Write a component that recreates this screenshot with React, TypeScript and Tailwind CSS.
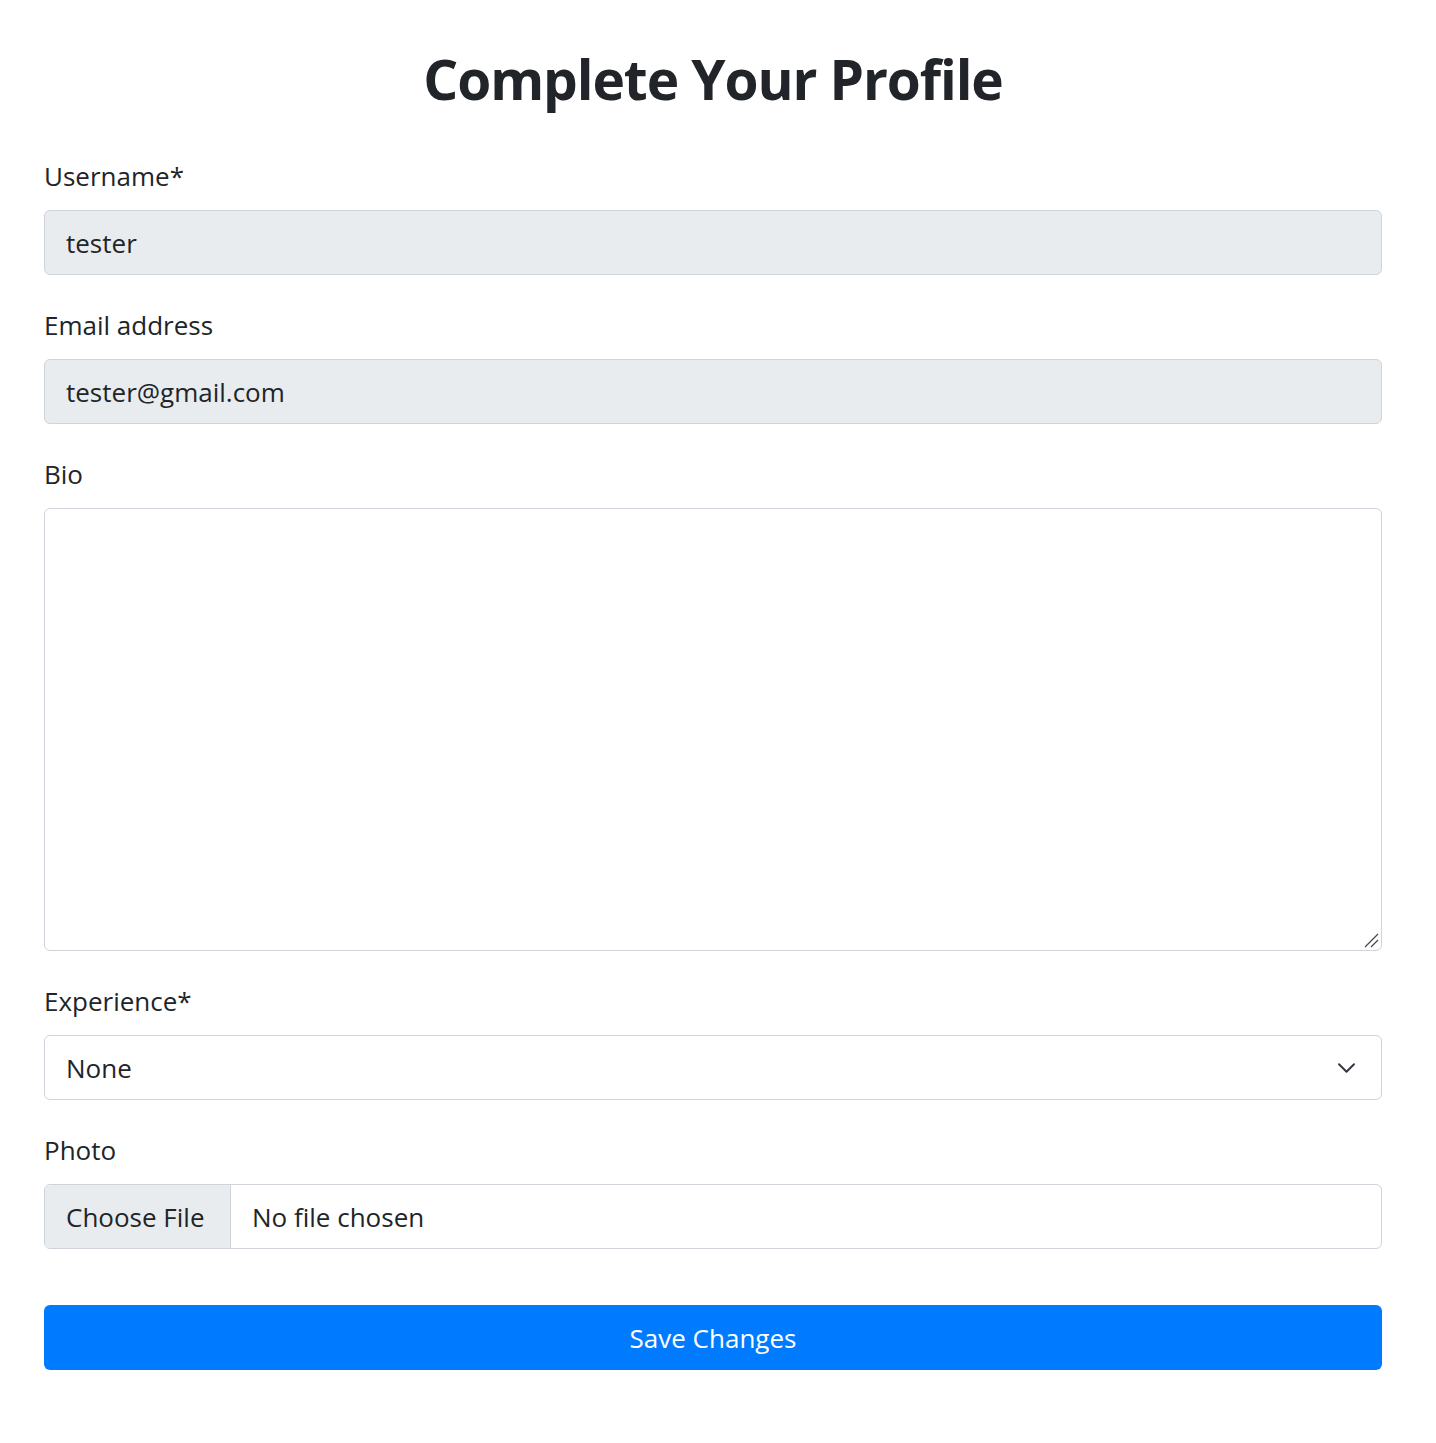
import React from "react";

function Label({ children }: { children: React.ReactNode }) {
  return (
    <div className="h-[41px] mb-[14px] pt-[1px] text-[26px] leading-[41px] text-[#212529]">{children}</div>
  );
}

export default function App() {
  return (
    <div
      className="min-h-[1443px] bg-white text-[#212529]"
      style={{ fontFamily: '"Open Sans", "Noto Sans", sans-serif' }}
    >
      <div className="ml-[44px] w-[1338px] pt-[38px]">
        <h1 className="text-center text-[55px] font-bold tracking-[-1.1px] leading-[82px] h-[82px] mb-[35px] text-[#212529]">
          Complete Your Profile
        </h1>

        <div className="flex flex-col">
          <Label>Username*</Label>
          <div className="h-[65px] rounded-[6px] border border-[#ced4da] bg-[#e9ecef] px-[21px] pt-[2px] flex items-center text-[26px]">
            tester
          </div>

          <div className="h-[29px]" />
          <Label>Email address</Label>
          <div className="h-[65px] rounded-[6px] border border-[#ced4da] bg-[#e9ecef] px-[21px] pt-[2px] flex items-center text-[26px]">
            tester@gmail.com
          </div>

          <div className="h-[29px]" />
          <Label>Bio</Label>
          <div className="relative h-[443px]">
            <textarea
              className="block w-full h-full rounded-[6px] border border-[#ced4da] bg-white px-[21px] py-[10px] text-[26px] outline-none resize-none"
              defaultValue=""
            />
            <svg className="absolute right-[2px] bottom-[2px]" width="18" height="18" viewBox="0 0 18 18" fill="none">
              <path d="M3 16 L16 3" stroke="#4a4a4a" strokeWidth="1.3" />
              <path d="M9 16 L16 9" stroke="#4a4a4a" strokeWidth="1.3" />
            </svg>
          </div>

          <div className="h-[29px]" />
          <Label>Experience*</Label>
          <div className="relative h-[65px] rounded-[6px] border border-[#ced4da] bg-white px-[21px] pt-[2px] flex items-center text-[26px]">
            None
            <svg
              className="absolute right-[21px] top-1/2 -translate-y-1/2"
              width="27"
              height="20"
              viewBox="0 0 16 16"
              fill="none"
            >
              <path d="m2 5 6 6 6-6" stroke="#343a40" strokeWidth="1.6" strokeLinecap="round" strokeLinejoin="round" />
            </svg>
          </div>

          <div className="h-[29px]" />
          <Label>Photo</Label>
          <div className="h-[65px] rounded-[6px] border border-[#ced4da] bg-white flex items-stretch text-[26px] overflow-hidden">
            <div className="w-[186px] shrink-0 bg-[#e9ecef] border-r border-[#ced4da] px-[21px] pt-[2px] flex items-center">Choose File</div>
            <div className="px-[21px] pt-[2px] flex items-center">No file chosen</div>
          </div>

          <div className="h-[56px]" />
          <button className="h-[65px] rounded-[6px] bg-[#007bff] text-white text-[26px] pt-[2px] flex items-center justify-center">
            Save Changes
          </button>
        </div>
      </div>
    </div>
  );
}
